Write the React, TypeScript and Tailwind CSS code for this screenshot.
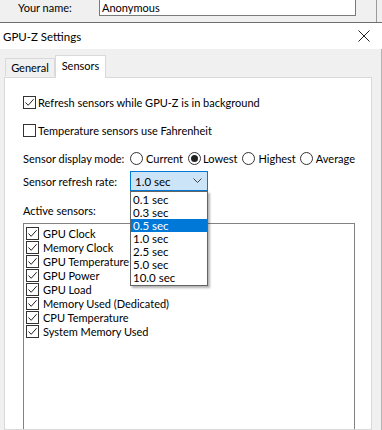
import React from "react";

const font = { fontFamily: 'Lato, "Noto Sans", sans-serif' };

function Check({ checked }: { checked: boolean }) {
  return (
    <span className="w-[13px] h-[13px] border border-[#333333] bg-white flex items-center justify-center shrink-0">
      {checked && (
        <svg width="11" height="11" viewBox="0 0 11 11">
          <path d="M1.5 5.5 L4.2 8.3 L9.6 2.2" fill="none" stroke="#222" strokeWidth="1" />
        </svg>
      )}
    </span>
  );
}

function Radio({ checked }: { checked: boolean }) {
  return (
    <span className="w-[13px] h-[13px] rounded-full border border-[#333333] bg-white flex items-center justify-center shrink-0">
      {checked && <span className="w-[7px] h-[7px] rounded-full bg-[#222]" />}
    </span>
  );
}

const sensors = [
  "GPU Clock",
  "Memory Clock",
  "GPU Temperature",
  "GPU Power",
  "GPU Load",
  "Memory Used (Dedicated)",
  "CPU Temperature",
  "System Memory Used",
];

const rates = ["0.1 sec", "0.3 sec", "0.5 sec", "1.0 sec", "2.5 sec", "5.0 sec", "10.0 sec"];

export default function App() {
  return (
    <div className="w-[382px] h-[430px] overflow-hidden bg-[#f0f0f0] text-[11px] text-black leading-[13px] whitespace-nowrap flex flex-col" style={font}>
      {/* background window strip */}
      <div className="h-[22px] flex items-start shrink-0">
        <div className="w-[99px] pl-[18px] h-[15px] flex items-center">Your name:</div>
        <div className="w-[257px] h-[16px] bg-white border-l border-r border-b border-[#7a7a7a] flex items-center pl-[2px]">Anonymous</div>
        <div className="w-[20px]" />
        <div className="w-px h-[22px] bg-[#9a9a9a]" />
      </div>
      {/* dialog */}
      <div className="flex-1 border-t border-[#6e6e6e] flex flex-col">
        <div className="h-[26px] bg-white flex items-center justify-between pl-[3px] pr-[12px] shrink-0">
          <span className="text-[11.5px]">GPU-Z Settings</span>
          <svg width="12" height="12" viewBox="0 0 12 12">
            <path d="M0.5 0.5 L11.5 11.5 M11.5 0.5 L0.5 11.5" stroke="#222" strokeWidth="1" />
          </svg>
        </div>
        <div className="flex-1 flex flex-col pl-[4px] pr-[9px] border-r border-[#b5b5b5]">
          {/* tabs */}
          <div className="h-[28px] flex items-end shrink-0 pl-[1px] relative z-10">
            <div className="w-[50px] h-[18px] border border-b-0 border-[#d9d9d9] bg-[#f0f0f0] flex items-center justify-center mb-px">General</div>
            <div className="w-[51px] border border-b-0 border-[#d9d9d9] bg-white flex items-start justify-center pt-[3px] -mb-px h-[23px]">Sensors</div>
          </div>
          {/* panel */}
          <div className="flex-1 bg-white border border-[#d9d9d9] flex flex-col pl-[18px] pr-[16px] relative">
            <div className="h-[18px]" />
            <div className="flex items-center gap-[2px] h-[13px]">
              <Check checked />
              <span>Refresh sensors while GPU-Z is in background</span>
            </div>
            <div className="h-[15px]" />
            <div className="flex items-center gap-[2px] h-[13px]">
              <Check checked={false} />
              <span>Temperature sensors use Fahrenheit</span>
            </div>
            <div className="h-[15px]" />
            <div className="flex items-center h-[13px]">
              <span className="w-[107px]">Sensor display mode:</span>
              <Radio checked={false} />
              <span className="ml-[3px] mr-[5px]">Current</span>
              <Radio checked />
              <span className="ml-[2px] mr-[5px]">Lowest</span>
              <Radio checked={false} />
              <span className="ml-[3px] mr-[4px]">Highest</span>
              <Radio checked={false} />
              <span className="ml-[3px]">Average</span>
            </div>
            <div className="h-[6px]" />
            <div className="flex items-center h-[20px]">
              <span className="w-[107px]">Sensor refresh rate:</span>
              <div className="relative text-[11.5px]">
                <div className="w-[78px] h-[20px] bg-[#cce4f7] border border-[#0078d7] flex items-center justify-between pl-[4px] pr-[5px]">
                  <span>1.0 sec</span>
                  <svg width="9" height="6" viewBox="0 0 9 6">
                    <path d="M0.5 0.5 L4.5 4.5 L8.5 0.5" fill="none" stroke="#444" strokeWidth="1" />
                  </svg>
                </div>
                <div className="absolute left-0 top-[20px] w-[78px] bg-white border border-[#646464] shadow-[2px_2px_2px_rgba(0,0,0,0.3)] z-20 flex flex-col py-px">
                  {rates.map((r) => (
                    <div
                      key={r}
                      className={
                        "h-[13px] leading-[13px] pl-[2px] " +
                        (r === "0.5 sec" ? "bg-[#0078d7] text-white" : "")
                      }
                    >
                      {r}
                    </div>
                  ))}
                </div>
              </div>
            </div>
            <div className="h-[13px]" />
            <div className="h-[13px] flex items-center">Active sensors:</div>
            <div className="h-[6px]" />
            <div className="flex-1 border border-[#828282] border-b-0 bg-white flex flex-col pt-[2px] pl-[2px]">
              {sensors.map((s) => (
                <div key={s} className="h-[14px] flex items-center gap-[4px]">
                  <Check checked />
                  <span>{s}</span>
                </div>
              ))}
            </div>
          </div>
        </div>
      </div>
    </div>
  );
}
